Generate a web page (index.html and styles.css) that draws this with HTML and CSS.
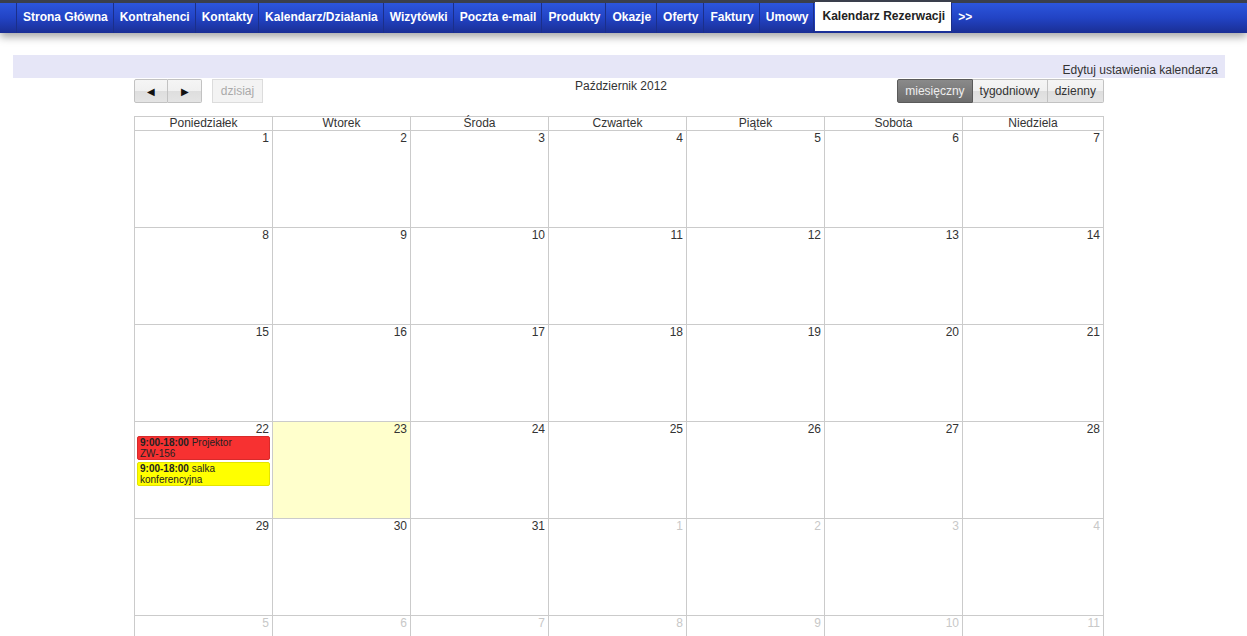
FILE: index.html
```html
<!DOCTYPE html>
<html lang="pl">
  <head>
    <meta charset="UTF-8" />
    <title>Kalendarz Rezerwacji</title>
    <link rel="stylesheet" href="styles.css">
  </head>
  <body>
    <!-- Top menu -->
    <div class="menu">
      <ul class="menu-list">
        <li><a href="#">Strona Główna</a></li>
        <li><a href="#">Kontrahenci</a></li>
        <li><a href="#">Kontakty</a></li>
        <li><a href="#">Kalendarz/Działania</a></li>
        <li><a href="#">Wizytówki</a></li>
        <li><a href="#">Poczta e-mail</a></li>
        <li><a href="#">Produkty</a></li>
        <li><a href="#">Okazje</a></li>
        <li><a href="#">Oferty</a></li>
        <li><a href="#">Faktury</a></li>
        <li><a href="#">Umowy</a></li>
        <li class="active"><a href="#">Kalendarz Rezerwacji</a></li>
        <li><a href="#">&gt;&gt;</a></li>
      </ul>
    </div>

    <div class="settings-bar">
      <a href="#">Edytuj ustawienia kalendarza</a>
    </div>

    <div class="calendar">
      <div class="cal-header">
        <div class="cal-left">
          <span class="btn-group">
            <button class="btn btn-first btn-arrow">&#9664;</button><button class="btn btn-last btn-arrow">&#9654;</button>
          </span>
          <button class="btn btn-disabled">dzisiaj</button>
        </div>
        <div class="cal-title">Październik 2012</div>
        <div class="cal-right">
          <span class="btn-group">
            <button class="btn btn-first btn-active">miesięczny</button><button class="btn">tygodniowy</button><button class="btn btn-last">dzienny</button>
          </span>
        </div>
      </div>

      <table class="month">
        <colgroup>
          <col class="col-day" />
          <col class="col-day" />
          <col class="col-day" />
          <col class="col-day" />
          <col class="col-day" />
          <col class="col-day" />
          <col class="col-last" />
        </colgroup>
        <thead>
          <tr>
            <th>Poniedziałek</th>
            <th>Wtorek</th>
            <th>Środa</th>
            <th>Czwartek</th>
            <th>Piątek</th>
            <th>Sobota</th>
            <th>Niedziela</th>
          </tr>
        </thead>
        <tbody>
          <tr>
            <td><div class="day-num">1</div></td>
            <td><div class="day-num">2</div></td>
            <td><div class="day-num">3</div></td>
            <td><div class="day-num">4</div></td>
            <td><div class="day-num">5</div></td>
            <td><div class="day-num">6</div></td>
            <td><div class="day-num">7</div></td>
          </tr>
          <tr>
            <td><div class="day-num">8</div></td>
            <td><div class="day-num">9</div></td>
            <td><div class="day-num">10</div></td>
            <td><div class="day-num">11</div></td>
            <td><div class="day-num">12</div></td>
            <td><div class="day-num">13</div></td>
            <td><div class="day-num">14</div></td>
          </tr>
          <tr>
            <td><div class="day-num">15</div></td>
            <td><div class="day-num">16</div></td>
            <td><div class="day-num">17</div></td>
            <td><div class="day-num">18</div></td>
            <td><div class="day-num">19</div></td>
            <td><div class="day-num">20</div></td>
            <td><div class="day-num">21</div></td>
          </tr>
          <tr>
            <td>
              <div class="day-num">22</div>
              <div class="event event-red"><b>9:00-18:00</b> Projektor <span class="nowrap">ZW-156</span></div>
              <div class="event event-yellow"><b>9:00-18:00</b> salka konferencyjna</div>
            </td>
            <td class="today"><div class="day-num">23</div></td>
            <td><div class="day-num">24</div></td>
            <td><div class="day-num">25</div></td>
            <td><div class="day-num">26</div></td>
            <td><div class="day-num">27</div></td>
            <td><div class="day-num">28</div></td>
          </tr>
          <tr>
            <td><div class="day-num">29</div></td>
            <td><div class="day-num">30</div></td>
            <td><div class="day-num">31</div></td>
            <td class="other"><div class="day-num">1</div></td>
            <td class="other"><div class="day-num">2</div></td>
            <td class="other"><div class="day-num">3</div></td>
            <td class="other"><div class="day-num">4</div></td>
          </tr>
          <tr>
            <td class="other"><div class="day-num">5</div></td>
            <td class="other"><div class="day-num">6</div></td>
            <td class="other"><div class="day-num">7</div></td>
            <td class="other"><div class="day-num">8</div></td>
            <td class="other"><div class="day-num">9</div></td>
            <td class="other"><div class="day-num">10</div></td>
            <td class="other"><div class="day-num">11</div></td>
          </tr>
        </tbody>
      </table>
    </div>
  </body>
</html>
```

FILE: styles.css
```css
/* Global */
body {
  margin: 0;
  font-family: "Liberation Sans", Arial, sans-serif;
  font-size: 12px;
  color: #333;
  background: #fff;
}

a {
  text-decoration: none;
}

/* Top menu */
.menu {
  height: 30px;
  border-top: 3px solid #3a3f4c;
  background: linear-gradient(#2c56dd, #2243c4 50%, #1a2e94);
  box-shadow: 0 4px 8px rgba(0, 0, 0, 0.35);
  padding-left: 16px;
}

.menu-list {
  display: flex;
  margin: 0;
  padding: 0;
  list-style: none;
  height: 30px;
}

.menu-list li {
  border-left: 1px solid #1b2f8a;
}

.menu-list a {
  display: block;
  height: 30px;
  line-height: 28px;
  padding: 0 5px 0 6px;
  color: #fff;
  font-weight: bold;
  font-size: 12px;
}

.menu-list li.active {
  padding-left: 1px;
}

.menu-list li.active a {
  background: #fff;
  color: #222;
  height: 29px;
  margin-top: -1px;
  line-height: 28px;
  padding: 0 6px 0 7px;
}

/* Settings bar */
.settings-bar {
  margin: 22px 22px 0 13px;
  height: 23px;
  background: #e6e6f7;
  text-align: right;
  padding-right: 7px;
}

.settings-bar a {
  display: inline-block;
  color: #333;
  font-size: 12px;
  line-height: 14px;
  padding-top: 8px;
}

/* Calendar */
.calendar {
  width: 970px;
  margin: 1px 0 0 134px;
}

.cal-header {
  display: flex;
  justify-content: space-between;
  height: 37px;
}

.cal-left,
.cal-right {
  width: 210px;
  display: flex;
  align-items: flex-start;
}

.cal-right {
  justify-content: flex-end;
}

.cal-title {
  font-size: 12px;
  color: #333;
  margin-left: 4px;
}

.btn-group {
  display: inline-flex;
}

.btn {
  height: 24px;
  padding: 0 7px;
  margin: 0;
  border: 1px solid #c2c2c2;
  border-left-width: 0;
  background: linear-gradient(#f5f5f5, #f0f0f0 50%, #dedede 50%, #e4e4e4);
  font-family: "Liberation Sans", Arial, sans-serif;
  font-size: 12px;
  color: #333;
}

.btn-first {
  border-left-width: 1px;
  border-radius: 2px 0 0 2px;
}

.btn-last {
  border-radius: 0 2px 2px 0;
}

.btn-arrow {
  width: 34px;
  padding: 0;
  font-size: 10px;
  color: #111;
}

.btn-active {
  background: linear-gradient(#8a8a8a, #6d6d6d);
  color: #eee;
  border-color: #5a5a5a;
}

.btn-disabled {
  margin-left: 10px;
  width: 51px;
  padding: 0;
  border: 1px solid #dcdcdc;
  background: #f3f3f3;
  color: #aaa;
}

/* Month grid */
.month {
  width: 969px;
  border-collapse: collapse;
  table-layout: fixed;
}

.col-day {
  width: 138px;
}

.col-last {
  width: 141px;
}

.month th {
  font-weight: normal;
  height: 13px;
  padding: 0;
  border: 1px solid #cbcbcb;
  font-size: 12px;
  line-height: 13px;
  color: #333;
}

.month td {
  height: 96px;
  padding: 0;
  border: 1px solid #cbcbcb;
  vertical-align: top;
}

.month td.today {
  background: #ffffcc;
}

.day-num {
  text-align: right;
  padding: 0 3px 0 0;
  font-size: 12px;
  line-height: 14px;
  color: #333;
}

.other .day-num {
  color: #c8c8c8;
}

/* Events */
.event {
  margin: 0 2px 2px 2px;
  padding: 0 2px;
  border-radius: 2px;
  font-size: 10px;
  line-height: 11px;
  color: #222;
}

.event b {
  font-size: 10px;
}

.nowrap {
  white-space: nowrap;
}

.event-red {
  background: #f73131;
  border: 1px solid #d82a2a;
}

.event-yellow {
  background: #ffff00;
  border: 1px solid #e4e400;
}
```
